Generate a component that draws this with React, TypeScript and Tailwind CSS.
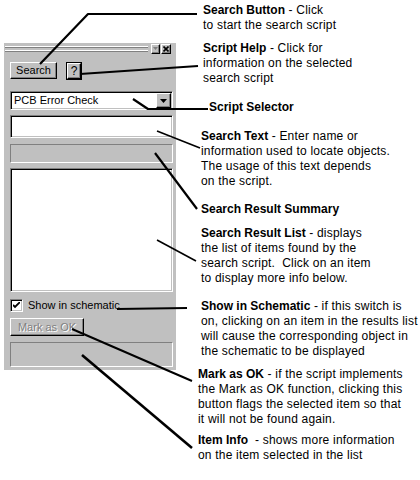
import type { ReactNode } from "react";

// Win9x style bevels
const raised =
  "border border-t-white border-l-white border-b-black border-r-black shadow-[inset_-1px_-1px_0_#808080]";
const sunken =
  "border border-t-[#808080] border-l-[#808080] border-b-white border-r-white shadow-[inset_1px_1px_0_#000,inset_-1px_-1px_0_#c0c0c0]";
const thinSunken = "border border-t-[#808080] border-l-[#808080] border-b-white border-r-white";

const Note = ({ title, lines, className }: { title: string; lines: string[]; className: string }) => (
  <div className={`text-[12px] leading-[15px] text-black whitespace-pre ${className}`}>
    <div>
      <span className="font-bold">{title}</span>
      <span className="tracking-[0.2px]">{lines[0]}</span>
    </div>
    {lines.slice(1).map((l) => (
      <div key={l} className="tracking-[0.2px]">
        {l}
      </div>
    ))}
  </div>
);

const Button = ({ children, className }: { children: ReactNode; className: string }) => (
  <div className={`flex items-center justify-center bg-[#c0c0c0] ${raised} ${className}`}>{children}</div>
);

const Leaders = () => (
  <svg className="pointer-events-none absolute inset-0" width={420} height={480} viewBox="0 0 420 480">
    <g fill="none" stroke="#000" strokeLinejoin="round">
      <polyline points="40,64 88,14 197,14" strokeWidth={2.2} />
      <line x1={80} y1={74} x2={198} y2={66} strokeWidth={2} />
      <polyline points="133,99 148,109 208,109" strokeWidth={2.2} />
      <line x1={157} y1={131} x2={200} y2={148} strokeWidth={1.6} />
      <line x1={155} y1={153} x2={197} y2={209} strokeWidth={2.2} />
      <line x1={157} y1={240} x2={196} y2={261} strokeWidth={1.6} />
      <line x1={117} y1={309} x2={187} y2={308} strokeWidth={2.2} />
      <line x1={72} y1={329} x2={192} y2={381} strokeWidth={2} />
      <line x1={82} y1={355} x2={192} y2={448} strokeWidth={2.6} />
    </g>
  </svg>
);

const ToolPanel = () => (
  <div className="ml-[4px] mt-[43px] flex h-[327px] w-[172px] flex-none flex-col bg-[#c0c0c0] text-[11px] text-black">
    {/* title grip + buttons */}
    <div className="flex h-[11px] items-center gap-[1px] pl-[1px] pr-[5px]">
      <div className="flex flex-1 flex-col gap-[2px] pr-[2px]">
        <div className="h-[2px] border-t border-b border-t-white border-b-[#808080]" />
        <div className="h-[2px] border-t border-b border-t-white border-b-[#808080]" />
      </div>
      <div className={`flex h-[10px] w-[9px] items-center justify-center ${raised}`}>
        <svg width="5" height="3" viewBox="0 0 5 3">
          <path d="M0 0h5L2.5 3z" fill="#808080" />
        </svg>
      </div>
      <div className={`flex h-[10px] w-[10px] items-center justify-center ${raised}`}>
        <svg width="6" height="6" viewBox="0 0 6 6">
          <path d="M0.5 0.5l5 5M5.5 0.5l-5 5" stroke="#000" strokeWidth="1.6" />
        </svg>
      </div>
    </div>

    <div className="flex flex-col pl-[6px] pr-[3px]">
      {/* search + help */}
      <div className="mt-[8px] flex h-[18px] items-start gap-[9px]">
        <Button className="h-[17px] w-[47px]">Search</Button>
        <div className="h-[18px] w-[16px] border border-black">
          <Button className="h-full w-full text-[12px]">?</Button>
        </div>
      </div>

      {/* script selector */}
      <div className={`mt-[11px] flex h-[19px] items-center bg-white ${sunken}`}>
        <span className="flex-1 pl-[3px]">PCB Error Check</span>
        <div className="mr-[1px] self-stretch py-[1px]">
          <Button className="h-full w-[15px]">
            <svg width="7" height="4" viewBox="0 0 7 4">
              <path d="M0 0h7L3.5 4z" fill="#000" />
            </svg>
          </Button>
        </div>
      </div>

      {/* search text */}
      <div className={`mt-[5px] h-[23px] bg-white ${sunken}`} />

      {/* result summary */}
      <div className={`mt-[6px] h-[19px] ${thinSunken}`} />

      {/* result list */}
      <div className={`mt-[5px] h-[124px] bg-white ${sunken}`} />

      {/* show in schematic */}
      <div className="mt-[7px] flex h-[13px] items-center gap-[5px]">
        <div className={`flex h-[13px] w-[13px] items-center justify-center bg-white ${sunken}`}>
          <svg width="7" height="7" viewBox="0 0 7 7">
            <path d="M0 3l2 2 5-5" fill="none" stroke="#000" strokeWidth="1.8" />
          </svg>
        </div>
        <span>Show in schematic</span>
      </div>

      {/* mark as ok (disabled) */}
      <Button className="mt-[6px] h-[18px] w-[74px] text-[#808080] [text-shadow:1px_1px_0_#fff]">Mark as OK</Button>

      {/* item info */}
      <div className={`mt-[6px] h-[25px] ${thinSunken}`} />
    </div>
  </div>
);

export default function App() {
  return (
    <div className="relative h-[480px] w-[420px] overflow-hidden bg-white font-['Liberation_Sans',Arial,sans-serif]">
      <div className="flex">
        <ToolPanel />
        <div className="ml-[22px] flex flex-col pt-[3px]">
          <Note className="pl-[5px]" title="Search Button" lines={[" - Click", "to start the search script"]} />
          <Note
            className="mt-[8px] pl-[5px]"
            title="Script Help"
            lines={[" - Click for", "information on the selected", "search script"]}
          />
          <Note className="mt-[14px] pl-[11px]" title="Script Selector" lines={[""]} />
          <Note
            className="mt-[14px] pl-[3px]"
            title="Search Text"
            lines={[
              " - Enter name or",
              "information used to locate objects.",
              "The usage of this text depends",
              "on the script.",
            ]}
          />
          <Note className="mt-[13px] pl-[3px]" title="Search Result Summary" lines={[""]} />
          <Note
            className="mt-[9px] pl-[3px]"
            title="Search Result List"
            lines={[
              " - displays",
              "the list of items found by the",
              "search script.  Click on an item",
              "to display more info below.",
            ]}
          />
          <Note
            className="mt-[13px] pl-[3px]"
            title="Show in Schematic"
            lines={[
              " - if this switch is",
              "on, clicking on an item in the results list",
              "will cause the corresponding object in",
              "the schematic to be displayed",
            ]}
          />
          <Note
            className="mt-[8px]"
            title="Mark as OK"
            lines={[
              " - if the script implements",
              "the Mark as OK function, clicking this",
              "button flags the selected item so that",
              "it will not be found again.",
            ]}
          />
          <Note
            className="mt-[6px]"
            title="Item Info"
            lines={["  - shows more information", "on the item selected in the list"]}
          />
        </div>
      </div>
      <Leaders />
    </div>
  );
}
